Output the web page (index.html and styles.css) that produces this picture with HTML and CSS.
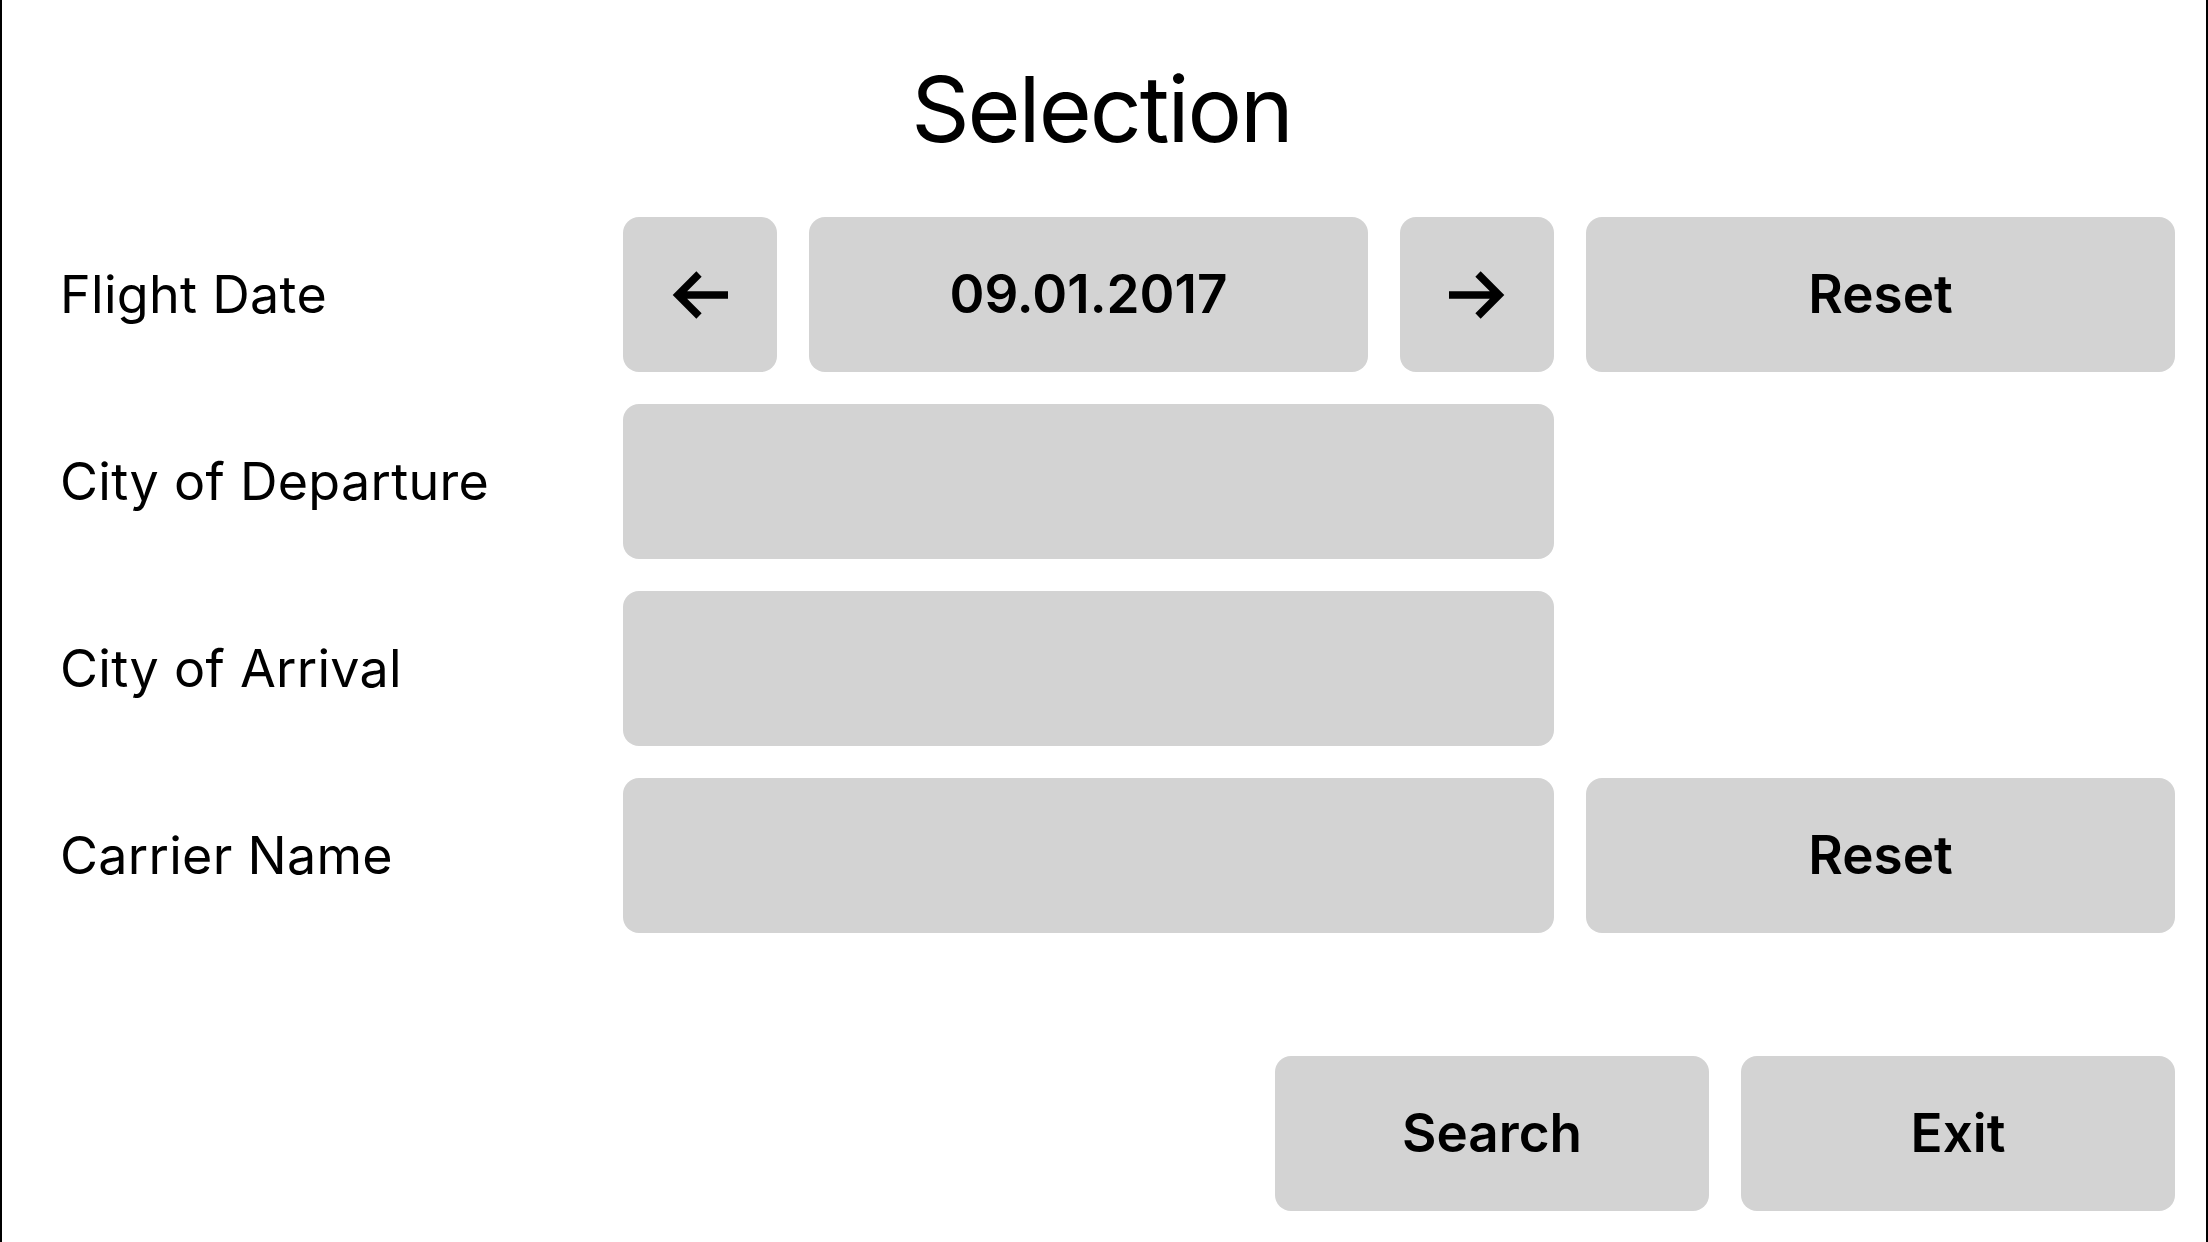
FILE: index.html
```html
<!DOCTYPE html>
<html lang="en">

<head>
    <meta charset="UTF-8">
    <meta name="viewport" content="width=device-width, initial-scale=1.0">
    <title>Selection</title>
    <link rel="stylesheet" href="styles.css">
</head>

<body>
    <div id="screen">
        <h1 class="title">Selection</h1>
        <div class="form">
            <div class="label">Flight Date</div>
            <button class="btn arrow">
                <svg width="60" height="50" viewBox="0 0 60 50"><path d="M58 25H8M29 4L8 25L29 46" /></svg>
            </button>
            <button class="btn">09.01.2017</button>
            <button class="btn arrow">
                <svg width="60" height="50" viewBox="0 0 60 50"><path d="M2 25H52M31 4L52 25L31 46" /></svg>
            </button>
            <button class="btn">Reset</button>

            <div class="label">City of Departure</div>
            <div class="field"></div>

            <div class="label">City of Arrival</div>
            <div class="field"></div>

            <div class="label">Carrier Name</div>
            <div class="field"></div>
            <button class="btn">Reset</button>
        </div>
        <div class="actions">
            <button class="btn">Search</button>
            <button class="btn">Exit</button>
        </div>
    </div>
</body>

</html>
```

FILE: styles.css
```css
* {
    margin: 0;
    padding: 0;
    box-sizing: border-box;
}

body {
    background: #fff;
    color: #000;
    font-family: Inter, "Noto Sans", sans-serif;
}

#screen {
    height: 100vh;
    border-left: 2px solid #000;
    border-right: 2px solid #000;
    padding: 0 31px 0 60px;
}

.title {
    padding-top: 64px;
    margin: 0 -26px 0 -60px;
    font-size: 91px;
    font-weight: 400;
    line-height: 1;
    letter-spacing: -2px;
    text-align: center;
}

.form {
    display: grid;
    grid-template-columns: 529px 154px 559px 154px 1fr;
    grid-auto-rows: 155px;
    gap: 32px;
    margin-top: 62px;
}

.label {
    grid-column: 1;
    align-self: center;
    margin-left: -2px;
    font-size: 52px;
    line-height: 1;
    letter-spacing: 0.3px;
}

.field {
    grid-column: 2 / 5;
    background: #d3d3d3;
    border-radius: 16px;
}

.btn {
    display: flex;
    justify-content: center;
    align-items: center;
    border: none;
    outline: none;
    background: #d3d3d3;
    border-radius: 16px;
    color: #000;
    font-family: inherit;
    font-size: 53px;
    font-weight: 600;
    line-height: 1;
    cursor: pointer;
}

.arrow svg path {
    fill: none;
    stroke: #000;
    stroke-width: 7.5;
}

.actions {
    display: flex;
    justify-content: flex-end;
    gap: 32px;
    margin-top: 123px;
}

.actions .btn {
    width: 434px;
    height: 155px;
}
```
